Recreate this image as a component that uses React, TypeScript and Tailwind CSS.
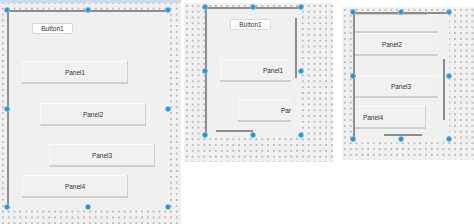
import React from "react";

const grid =
  "relative bg-[#f0f0f0] bg-[radial-gradient(circle,#ababab_0.6px,transparent_0.9px)] bg-[length:5.8px_5.8px]";

const panel =
  "absolute h-[23px] w-[106px] bg-[#f1f1f1] shadow-[inset_-1px_-2px_0_#cfcfcf,inset_1px_1px_0_#fafafa] flex items-center justify-center text-[6.5px] text-[#333]";

function Handle({ x, y }: { x: number; y: number }) {
  return (
    <div
      className="absolute w-[6px] h-[6px] -ml-[3px] -mt-[3px] rounded-full bg-[#2d8fd5] border border-[#7cc0ef] z-10"
      style={{ left: x, top: y }}
    />
  );
}

function Handles({ x, y, w, h }: { x: number; y: number; w: number; h: number }) {
  const mx = x + Math.round(w / 2);
  const my = y + Math.round(h / 2);
  return (
    <>
      {[
        [x, y], [mx, y], [x + w, y],
        [x, my], [x + w, my],
        [x, y + h], [mx, y + h], [x + w, y + h],
      ].map(([a, b], i) => (
        <Handle key={i} x={a} y={b} />
      ))}
    </>
  );
}

function Button1({ left, top }: { left: number; top: number }) {
  return (
    <div
      className="absolute w-[41px] h-[11px] bg-white border border-[#dadada] rounded-[2px] flex items-center justify-center text-[6.5px] text-[#333]"
      style={{ left, top }}
    >
      Button1
    </div>
  );
}

function Panel({ label, left, top }: { label: string; left: number; top: number }) {
  return (
    <div className={panel} style={{ left, top }}>
      {label}
    </div>
  );
}

export default function App() {
  return (
    <div
      className="flex items-start w-[474px] h-[224px] bg-white overflow-hidden"
      style={{ fontFamily: '"Liberation Sans", Arial, sans-serif' }}
    >
      {/* designer 1: full form */}
      <div className={`${grid} w-[181px] h-[224px] shrink-0`}>
        <div className="h-[3px] bg-[#cbdcf0]" />
        <div className="absolute left-[7px] top-[10px] w-[161px] h-[197px] bg-[#f0f0f0] border-t-2 border-l-2 border-[#8e8e8e]">
          <Button1 left={23} top={11} />
          <Panel label="Panel1" left={13} top={49} />
          <Panel label="Panel2" left={31} top={91} />
          <Panel label="Panel3" left={40} top={132} />
          <Panel label="Panel4" left={13} top={163} />
        </div>
        <Handles x={7} y={10} w={161} h={197} />
      </div>

      {/* designer 2: shrunk form with scrollbars */}
      <div className={`${grid} ml-[3px] mt-[3px] w-[149px] h-[159px] shrink-0`}>
        <div className="absolute left-[21px] top-[4px] w-[96px] h-[128px] bg-[#f0f0f0] border-t-2 border-l-2 border-[#8e8e8e]">
          <div className="absolute left-0 top-0 w-[84px] h-[117px] overflow-hidden">
            <Button1 left={23} top={10} />
            <Panel label="Panel1" left={13} top={50} />
            <Panel label="Panel2" left={31} top={90} />
          </div>
          <div className="absolute left-[88px] top-[9px] w-[2px] h-[60px] bg-[#8c8c8c]" />
          <div className="absolute left-[9px] top-[121px] w-[37px] h-[2px] bg-[#8c8c8c]" />
        </div>
        <Handles x={21} y={4} w={96} h={128} />
      </div>

      {/* designer 3: scrolled form */}
      <div className={`${grid} ml-[9px] mt-[7px] w-[132px] h-[153px] shrink-0`}>
        <div className="absolute left-[11px] top-[5px] w-[96px] h-[127px] bg-[#f0f0f0] border-t-2 border-l-2 border-[#8e8e8e]">
          <div className="absolute left-0 top-0 w-[83px] h-[117px] overflow-hidden">
            <Panel label="" left={-20} top={-4} />
            <div className={panel} style={{ left: -34, top: -22 }} />
            <Panel label="Panel2" left={-16} top={19} />
            <Panel label="Panel3" left={-7} top={61} />
            <Panel label="Panel4" left={-35} top={92} />
          </div>
          <div className="absolute left-[88px] top-[45px] w-[2px] h-[61px] bg-[#8c8c8c]" />
          <div className="absolute left-[29px] top-[120px] w-[38px] h-[2px] bg-[#8c8c8c]" />
        </div>
        <Handles x={11} y={5} w={96} h={127} />
      </div>
    </div>
  );
}
